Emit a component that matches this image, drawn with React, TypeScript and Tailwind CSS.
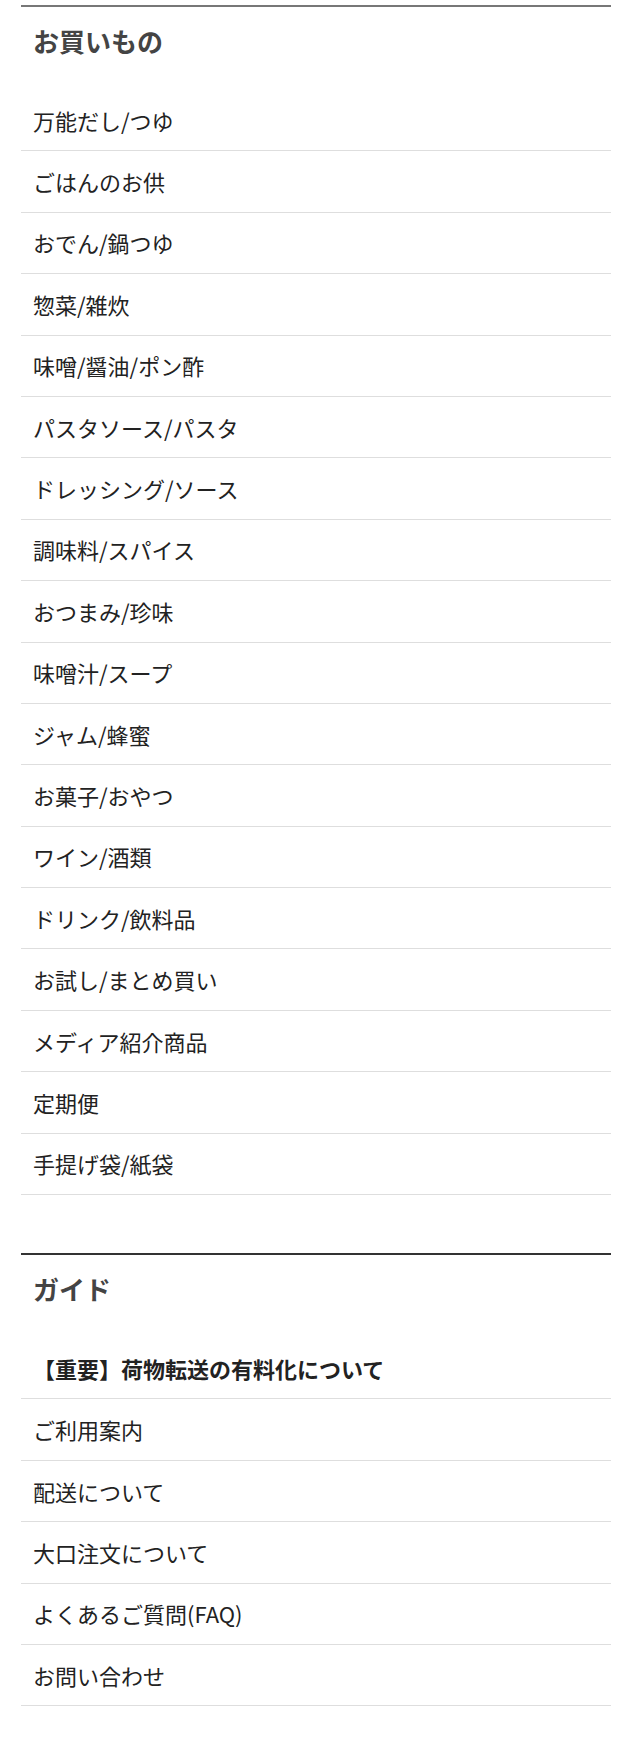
const shopping = [
  "万能だし/つゆ",
  "ごはんのお供",
  "おでん/鍋つゆ",
  "惣菜/雑炊",
  "味噌/醤油/ポン酢",
  "パスタソース/パスタ",
  "ドレッシング/ソース",
  "調味料/スパイス",
  "おつまみ/珍味",
  "味噌汁/スープ",
  "ジャム/蜂蜜",
  "お菓子/おやつ",
  "ワイン/酒類",
  "ドリンク/飲料品",
  "お試し/まとめ買い",
  "メディア紹介商品",
  "定期便",
  "手提げ袋/紙袋",
];

const guide = [
  { label: "【重要】荷物転送の有料化について", bold: true },
  { label: "ご利用案内" },
  { label: "配送について" },
  { label: "大口注文について" },
  { label: "よくあるご質問(FAQ)" },
  { label: "お問い合わせ" },
];

function Section({
  title,
  items,
  lineColor,
  className = "",
}: {
  title: string;
  items: { label: string; bold?: boolean }[];
  lineColor: string;
  className?: string;
}) {
  return (
    <section className={`ml-[21px] w-[590px] border-t-2 ${lineColor} ${className}`}>
      <h2 className="pl-3 pt-[19px] pb-[34px] text-[26px] leading-[30px] font-bold text-[#444]">{title}</h2>
      <ul>
        {items.map((it) => (
          <li
            key={it.label}
            className={`h-[61.4px] flex items-center pl-3 border-b border-[#dedede] text-[22px] text-[#222] ${it.bold ? "font-bold" : ""}`}
          >
            {it.label}
          </li>
        ))}
      </ul>
    </section>
  );
}

export default function App() {
  return (
    <div
      className="w-[630px] h-[1760px] bg-white pt-[5px]"
      style={{ fontFamily: '"Noto Sans CJK JP", "Noto Sans", sans-serif' }}
    >
      <Section title="お買いもの" items={shopping.map((label) => ({ label }))} lineColor="border-[#777]" />
      <Section title="ガイド" items={guide} lineColor="border-[#333]" className="mt-[58px]" />
    </div>
  );
}
